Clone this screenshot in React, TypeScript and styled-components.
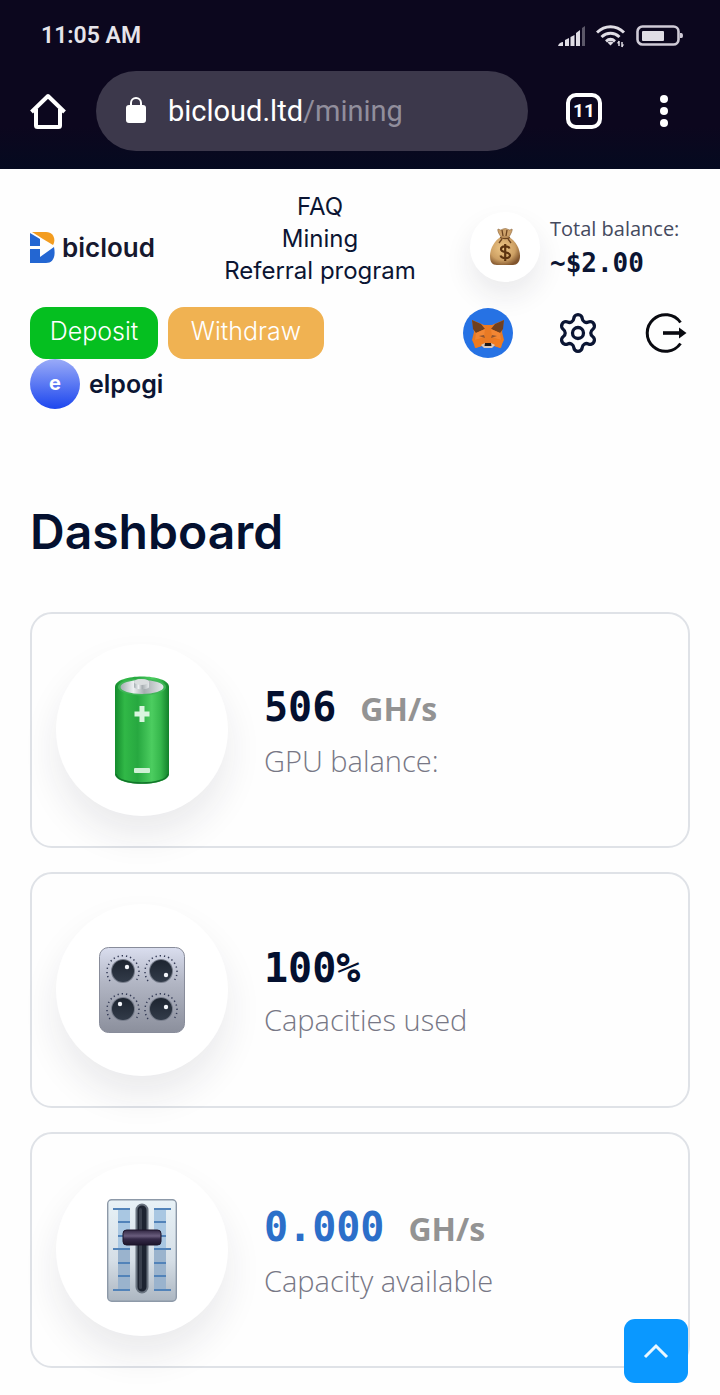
import React from 'react';
import styled, { createGlobalStyle, css } from 'styled-components';
import { Settings } from 'lucide-react';

const GlobalStyle = createGlobalStyle`
  * {
    box-sizing: border-box;
  }
  body {
    margin: 0;
    background: #fefefe;
    color: #0b1533;
    font-family: Inter, sans-serif;
  }
  button {
    padding: 0;
    border: 0;
    background: none;
    color: inherit;
    font: inherit;
    cursor: pointer;
  }
  a {
    color: inherit;
    text-decoration: none;
  }
  svg {
    display: block;
    flex-shrink: 0;
  }
`;

const Browser = {
  Wrap: styled.div`
    padding-bottom: 18px;
    background: linear-gradient(#0c071e 75%, #050a20);
    color: #fff;
    font-family: Roboto, sans-serif;
  `,
  Status: styled.div`
    display: flex;
    align-items: center;
    justify-content: space-between;
    height: 71px;
    padding: 0 36px 0 41px;
    color: #e6e4ea;
    font-size: 23px;
    font-weight: 600;
  `,
  StatusIcons: styled.div`
    display: flex;
    align-items: center;
    gap: 10px;
  `,
  Bar: styled.div`
    display: flex;
    align-items: center;
    padding: 0 36px 0 28px;
  `,
  Address: styled.button`
    display: flex;
    flex: 1;
    align-items: center;
    gap: 20px;
    height: 80px;
    margin: 0 38px 0 28px;
    padding: 0 28px;
    border-radius: 40px;
    background: #3c384b;
    font-size: 29px;
    text-align: left;
  `,
  Path: styled.span`
    color: #918e9c;
  `,
  Tabs: styled.button`
    width: 36px;
    height: 36px;
    margin-right: 42px;
    border: 4px solid #fff;
    border-radius: 10px;
    font-size: 19px;
    font-weight: 700;
    line-height: 28px;
  `,
  Menu: styled.button`
    display: flex;
    justify-content: center;
    width: 40px;
  `,
};

const Page = styled.main`
  padding: 0 30px 27px;
`;

const Header = styled.header`
  padding-top: 22px;
`;

const HeaderTop = styled.div`
  display: grid;
  grid-template-columns: 140px 1fr 220px;
  align-items: center;
`;

const Logo = styled.a`
  display: flex;
  align-items: center;
  gap: 7px;
  padding-top: 16px;
  font-size: 26px;
  font-weight: 600;
  color: #17182e;
`;

const Nav = styled.nav`
  display: flex;
  flex-direction: column;
  align-items: center;
  font-size: 24px;
  line-height: 32px;
`;

const Balance = styled.div`
  display: flex;
  align-items: center;
  gap: 10px;
  padding-top: 16px;
`;

const Disc = styled.div<{ $size: number }>`
  display: flex;
  flex-shrink: 0;
  align-items: center;
  justify-content: center;
  width: ${({ $size }) => $size}px;
  height: ${({ $size }) => $size}px;
  border-radius: 50%;
  background: #fff;
  box-shadow: 0 ${({ $size }) => ($size > 100 ? '20px 36px' : '14px 28px')} rgba(30, 30, 60, 0.09);
`;

const mono = css`
  font-family: 'DejaVu Sans Mono', monospace;
  font-weight: 700;
`;

const BalanceText = styled.div`
  font-family: 'Open Sans', sans-serif;
  font-size: 20px;
  line-height: 32px;
  white-space: nowrap;
  color: #454a5e;
`;

const BalanceValue = styled.div`
  ${mono}
  font-size: 26px;
  line-height: 36px;
  color: #0b1533;
`;

const HeaderActions = styled.div`
  display: flex;
  align-items: center;
  justify-content: space-between;
  margin-top: 20px;
`;

const ButtonGroup = styled.div`
  display: flex;
  gap: 10px;
`;

const ActionButton = styled.button<{ $color: string; $width: number }>`
  min-width: ${({ $width }) => $width}px;
  height: 52px;
  padding-bottom: 4px;
  border-radius: 16px;
  background: ${({ $color }) => $color};
  color: #fff;
  font-size: 25px;
  font-weight: 300;
`;

const IconGroup = styled.div`
  display: flex;
  align-items: center;
  gap: 43px;
  padding-right: 3px;
`;

const User = styled.div`
  display: flex;
  align-items: center;
  gap: 9px;
  font-size: 25px;
  font-weight: 600;
`;

const Avatar = styled.div`
  width: 50px;
  height: 50px;
  border-radius: 50%;
  background: linear-gradient(#9aabf8, #1c46ee);
  color: #fff;
  font-size: 20px;
  font-weight: 700;
  line-height: 48px;
  text-align: center;
`;

const Title = styled.h1`
  margin: 93px 0 50px;
  font-size: 48px;
  font-weight: 600;
  line-height: 60px;
  color: #04102f;
`;

const CardList = styled.div`
  display: grid;
  gap: 24px;
`;

const S = {
  Card: styled.section`
    display: flex;
    align-items: center;
    gap: 36px;
    height: 236px;
    padding: 0 24px;
    border: 2px solid #dfe2e7;
    border-radius: 22px;
  `,
  Value: styled.div<{ $accent?: boolean }>`
    ${mono}
    display: flex;
    align-items: baseline;
    gap: 24px;
    font-size: 40px;
    line-height: 56px;
    color: ${({ $accent }) => ($accent ? '#2c6fc9' : '#04102f')};
  `,
  Unit: styled.span`
    font-family: 'Open Sans', sans-serif;
    font-size: 32px;
    color: #939393;
  `,
  Label: styled.div`
    padding-top: 4px;
    font-family: 'Open Sans', sans-serif;
    font-size: 29px;
    font-weight: 300;
    line-height: 40px;
    color: #777785;
  `,
};

const ScrollTop = styled.button`
  position: fixed;
  right: 32px;
  bottom: 12px;
  display: flex;
  align-items: center;
  justify-content: center;
  width: 64px;
  height: 64px;
  border-radius: 11px;
  background: #0a98ff;
`;

const SignalIcon = () => (
  <svg width="28" height="20" viewBox="0 0 28 20" fill="#e0dde5">
    <path d="M0 20c1-3 3-4 5-4v4zM7 14l4-2v8H7zM12.500 11l4-2v11h-4zM18 7l4-3v16h-4z" />
    <path d="M24 2l3-2v20h-3z" fill="#5b5768" />
  </svg>
);

const WifiIcon = () => (
  <svg width="30" height="24" viewBox="0 0 30 24" fill="none" stroke="#e0dde5" strokeWidth="3">
    <path d="M1 8.500C9 .8 20 .8 28 8.500M5.500 13c5.500-5 12.500-5 18 0M10 17.300c3-2.500 6-2.500 9 0" />
    <path d="M11.500 18.500c2-1.200 4-1.200 6 0l-3 3z" fill="#e0dde5" stroke="none" />
    <path d="M23 17v5M26 18v5" strokeWidth="1.500" />
    <path d="M20.800 19.200L23 16.500v3zM28.200 20.500L26 23.500v-3z" fill="#e0dde5" stroke="none" />
  </svg>
);

const PowerIcon = () => (
  <svg width="48" height="22" viewBox="0 0 48 22">
    <rect x="1.500" y="1.500" width="41" height="18" rx="5" fill="none" stroke="#cfcad6" strokeWidth="2.600" />
    <rect x="6" y="6" width="22" height="10" rx="1" fill="#e0dde5" />
    <path d="M44 8h1.500q1.500 0 1.500 2.500T45.500 13H44z" fill="#cfcad6" />
  </svg>
);

const HomeIcon = () => (
  <svg width="40" height="40" viewBox="0 0 40 40" fill="none" stroke="#fff" strokeWidth="4">
    <path d="M3.500 21L20 5l16.500 16" strokeLinejoin="round" />
    <path d="M8 18v16.500q0 1.500 1.500 1.500h21q1.500 0 1.500-1.500V18" />
  </svg>
);

const LockIcon = () => (
  <svg width="24" height="32" viewBox="0 0 24 32">
    <rect x="2" y="10" width="20" height="18" rx="3" fill="#fff" />
    <path d="M7 11V8a5 5 0 0 1 10 0v3" fill="none" stroke="#fff" strokeWidth="2" />
  </svg>
);

const DotsIcon = () => (
  <svg width="8" height="36" viewBox="0 0 8 36" fill="#fff">
    <circle cx="4" cy="6" r="4" />
    <circle cx="4" cy="18" r="4" />
    <circle cx="4" cy="30" r="4" />
  </svg>
);

const LogoMark = () => (
  <svg width="25" height="31" viewBox="0 0 25 31">
    <path d="M2 0h14c8 0 10 8 7 13l-10-6z" fill="#f39c1f" />
    <path d="M0 1l10 6v7H0zM0 17h10v8l14-10c2 10-1 16-8 16H0z" fill="#2366d2" />
  </svg>
);

const MoneyBagIcon = () => (
  <svg width="32" height="38" viewBox="0 0 32 38">
    <defs>
      <radialGradient id="bag" cx=".42" cy=".4" r=".65">
        <stop offset="0" stopColor="#f0c886" />
        <stop offset=".65" stopColor="#cda064" />
        <stop offset="1" stopColor="#81552d" />
      </radialGradient>
    </defs>
    <path d="M9 1q3 2 5 0 3-1 4 0 3 2 5 0 1 1-3 8h-8Q8 3 9 1z" fill="#cda26a" stroke="#8a6138" strokeWidth=".6" />
    <path d="M12 9h8c7 4 11 12 11 19 0 6-3 9-7 9H8c-5 0-7-3-7-9C1 20 6 12 12 9z" fill="url(#bag)" />
    <path d="M11 9.500q5 2 10 0M13 2l1 6M18 2l-1 6M13 11l-3 4M19 11l3 4" fill="none" stroke="#6b431f" strokeWidth="1.300" />
    <path
      d="M20.500 20.500c-1-3-8.500-3-8.500.8 0 4 9 2 9 6 0 4-8.500 3.500-9.500.2M16.200 16v17"
      fill="none"
      stroke="#5d3410"
      strokeWidth="2.200"
    />
  </svg>
);

const FoxIcon = () => (
  <svg width="50" height="50" viewBox="0 0 50 50">
    <circle cx="25" cy="25" r="25" fill="#2672e4" />
    <path d="M9 12l12 5h8l12-5-2 12 2 8-4 8-6-2-3 2h-6l-3-2-6 2-4-8 2-8z" fill="#e97a24" />
    <path d="M9 12l9 4 4 5-9 4-3-4zM41 12l-9 4-4 5 9 4 3-4z" fill="#70401f" />
    <path d="M13 25l9-4-1 8-9 3zM37 25l-9-4 1 8 9 3z" fill="#f28633" />
    <path d="M16 28l5-1 1 3zM34 28l-5-1-1 3z" fill="#8e5430" />
    <path d="M10 32l9-1 2 6-9 3zM40 32l-9-1-2 6 9 3z" fill="#ef7b1f" />
    <path d="M18 37l4-2h6l4 2-3 3h-8z" fill="#d8c8bc" />
    <path d="M22 35h6l.5 3h-7z" fill="#1c1716" />
  </svg>
);

const LogoutIcon = () => (
  <svg width="44" height="44" viewBox="0 0 44 44" fill="none" stroke="#090a10" strokeWidth="3">
    <path d="M37.500 11.500a18.300 18.300 0 1 0 0 21" />
    <path d="M20 22h17" strokeWidth="3.600" />
    <path d="M36 16.500l7.500 5.500-7.500 5.500z" fill="#090a10" stroke="none" />
  </svg>
);

const CellIcon = () => (
  <svg width="54" height="108" viewBox="0 0 54 108">
    <defs>
      <linearGradient id="cell">
        <stop offset="0" stopColor="#148b2d" />
        <stop offset=".18" stopColor="#31b847" />
        <stop offset=".42" stopColor="#27a840" />
        <stop offset=".68" stopColor="#4ccd60" />
        <stop offset=".85" stopColor="#35b64b" />
        <stop offset="1" stopColor="#12812a" />
      </linearGradient>
      <linearGradient id="cap">
        <stop offset="0" stopColor="#a4aeb2" />
        <stop offset=".3" stopColor="#edf0f2" />
        <stop offset=".55" stopColor="#a6adb0" />
        <stop offset="1" stopColor="#e5e9eb" />
      </linearGradient>
    </defs>
    <path d="M0 11C0-3 54-3 54 11v87c0 13-54 13-54 0z" fill="url(#cell)" />
    <path d="M1 98c2 12 50 12 52 0" fill="none" stroke="#12752a" strokeWidth="1.500" />
    <ellipse cx="27" cy="11" rx="24" ry="8.500" fill="#40b658" />
    <ellipse cx="27" cy="11" rx="21.500" ry="7" fill="url(#cap)" />
    <path d="M19 6c0-4 15-4 15 0v5c0 3-15 3-15 0z" fill="url(#cap)" />
    <ellipse cx="26.500" cy="6" rx="7.500" ry="3" fill="#dadedf" />
    <path d="M24.500 30h5v5.500h5v5h-5V46h-5v-5.500h-5v-5h5z" fill="#d9f5df" />
    <rect x="19" y="92" width="16" height="5" rx="1" fill="#cff0d5" />
  </svg>
);

const knobs = [
  { x: 24, y: 24, dx: 4, dy: -4 },
  { x: 62, y: 24, dx: 5, dy: 4 },
  { x: 24, y: 62, dx: -3, dy: -5 },
  { x: 62, y: 62, dx: 5, dy: -2 },
];

const KnobsIcon = () => (
  <svg width="86" height="86" viewBox="0 0 86 86">
    <defs>
      <linearGradient id="panel" x2="0" y2="1">
        <stop offset="0" stopColor="#dadeef" />
        <stop offset=".4" stopColor="#b3b7c5" />
        <stop offset="1" stopColor="#8b8f9c" />
      </linearGradient>
      <linearGradient id="knob" x2="0" y2="1">
        <stop offset="0" stopColor="#1d2430" />
        <stop offset="1" stopColor="#323b49" />
      </linearGradient>
    </defs>
    <rect x=".5" y=".5" width="85" height="85" rx="9" fill="url(#panel)" stroke="#888c9a" />
    {knobs.map(({ x, y, dx, dy }) => (
      <g key={`${x}-${y}`}>
        <path
          d={`M${x - 13} ${y + 10}A16 16 0 1 1 ${x + 13} ${y + 10}`}
          fill="none"
          stroke="#333a55"
          strokeWidth="1.500"
          strokeDasharray="1.300 2.900"
        />
        <circle cx={x} cy={y} r="12" fill="#777d8b" />
        <circle cx={x} cy={y} r="11" fill="url(#knob)" />
        <circle cx={x + dx} cy={y + dy} r="2.200" fill="#f4f6fb" />
      </g>
    ))}
  </svg>
);

const SliderIcon = () => (
  <svg width="70" height="103" viewBox="0 0 70 103">
    <defs>
      <linearGradient id="plate" x2="0" y2="1">
        <stop offset="0" stopColor="#e8f2f7" />
        <stop offset=".6" stopColor="#d5dee6" />
        <stop offset="1" stopColor="#acb6c1" />
      </linearGradient>
      <linearGradient id="handle" x2="0" y2="1">
        <stop offset="0" stopColor="#312642" />
        <stop offset=".4" stopColor="#6a5d7d" />
        <stop offset=".6" stopColor="#352a48" />
        <stop offset="1" stopColor="#1d162c" />
      </linearGradient>
    </defs>
    <rect x=".7" y=".7" width="68.600" height="101.600" rx="4" fill="url(#plate)" stroke="#8d99a8" strokeWidth="1.400" />
    <path d="M11 10h12v82H11zM47 10h12v82H47z" fill="#a9c7e2" />
    <path d="M11 50h12v42H11zM47 50h12v42H47z" fill="#9ab3cd" />
    <path
      d="M6 10h17M47 10h17M11 23h12M47 23h12M11 37h12M47 37h12M6 50h17M47 50h17M11 64h12M47 64h12M11 77h12M47 77h12M6 91h17M47 91h17"
      stroke="#5283b9"
      strokeWidth="2"
    />
    <rect x="29.500" y="5.500" width="11" height="88" rx="5.500" fill="#1d2431" stroke="#69737f" strokeWidth="2" />
    <rect x="32" y="9" width="3" height="81" rx="1.500" fill="#39404d" />
    <rect x="16" y="31" width="38" height="15" rx="3.500" fill="url(#handle)" stroke="#1d152b" />
  </svg>
);

interface IStatCardProps {
  icon: React.ReactNode;
  value: string;
  unit?: string;
  label: string;
  accent?: boolean;
}

const StatCard = ({ icon, value, unit, label, accent }: IStatCardProps) => {
  return (
    <S.Card>
      <Disc $size={172}>{icon}</Disc>
      <div>
        <S.Value $accent={accent}>
          {value}
          {unit && <S.Unit>{unit}</S.Unit>}
        </S.Value>
        <S.Label>{label}</S.Label>
      </div>
    </S.Card>
  );
};

const App = () => {
  return (
    <>
      <GlobalStyle />
      <Browser.Wrap>
        <Browser.Status>
          <span>11:05 AM</span>
          <Browser.StatusIcons>
            <SignalIcon />
            <WifiIcon />
            <PowerIcon />
          </Browser.StatusIcons>
        </Browser.Status>
        <Browser.Bar>
          <button aria-label="Home">
            <HomeIcon />
          </button>
          <Browser.Address>
            <LockIcon />
            <span>
              bicloud.ltd<Browser.Path>/mining</Browser.Path>
            </span>
          </Browser.Address>
          <Browser.Tabs>11</Browser.Tabs>
          <Browser.Menu aria-label="Menu">
            <DotsIcon />
          </Browser.Menu>
        </Browser.Bar>
      </Browser.Wrap>
      <Page>
        <Header>
          <HeaderTop>
            <Logo href="#">
              <LogoMark />
              bicloud
            </Logo>
            <Nav>
              <a href="#faq">FAQ</a>
              <a href="#mining">Mining</a>
              <a href="#referral">Referral program</a>
            </Nav>
            <Balance>
              <Disc $size={70}>
                <MoneyBagIcon />
              </Disc>
              <BalanceText>
                Total balance:
                <BalanceValue>~$2.00</BalanceValue>
              </BalanceText>
            </Balance>
          </HeaderTop>
          <HeaderActions>
            <ButtonGroup>
              <ActionButton $color="#05bf20" $width={128}>
                Deposit
              </ActionButton>
              <ActionButton $color="#f0b252" $width={156}>
                Withdraw
              </ActionButton>
            </ButtonGroup>
            <IconGroup>
              <button aria-label="Wallet">
                <FoxIcon />
              </button>
              <button aria-label="Settings">
                <Settings size={44} strokeWidth={1.8} />
              </button>
              <button aria-label="Log out">
                <LogoutIcon />
              </button>
            </IconGroup>
          </HeaderActions>
          <User>
            <Avatar>e</Avatar>
            elpogi
          </User>
        </Header>
        <Title>Dashboard</Title>
        <CardList>
          <StatCard icon={<CellIcon />} value="506" unit="GH/s" label="GPU balance:" />
          <StatCard icon={<KnobsIcon />} value="100%" label="Capacities used" />
          <StatCard icon={<SliderIcon />} value="0.000" unit="GH/s" label="Capacity available" accent />
        </CardList>
      </Page>
      <ScrollTop aria-label="Back to top">
        <svg width="28" height="28" viewBox="0 0 28 28" fill="none" stroke="#e9f7ff" strokeWidth="3">
          <path d="M3 20L14 9l11 11" />
        </svg>
      </ScrollTop>
    </>
  );
};

export default App;
